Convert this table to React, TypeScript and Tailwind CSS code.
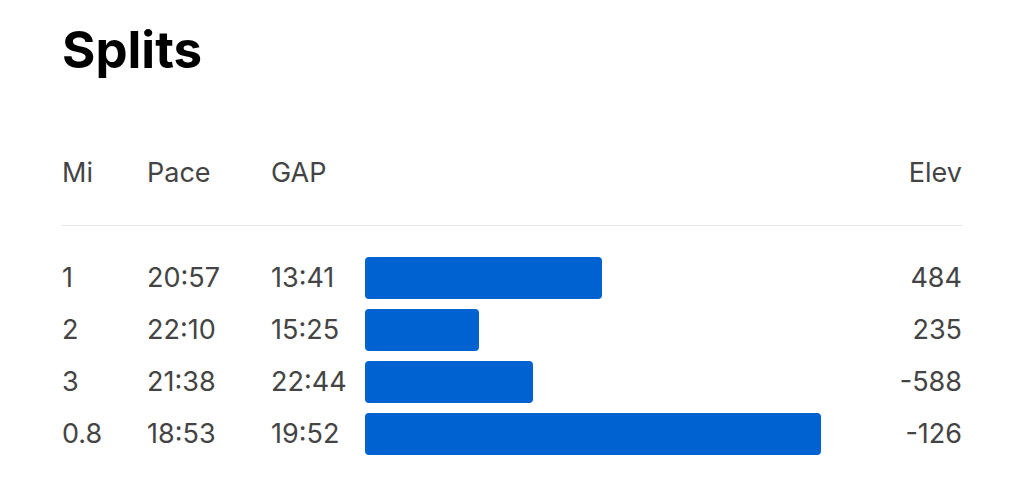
const splits = [
  { mi: "1", pace: "20:57", gap: "13:41", bar: 237, elev: "484" },
  { mi: "2", pace: "22:10", gap: "15:25", bar: 114, elev: "235" },
  { mi: "3", pace: "21:38", gap: "22:44", bar: 168, elev: "-588" },
  { mi: "0.8", pace: "18:53", gap: "19:52", bar: 456, elev: "-126" },
];

export default function App() {
  return (
    <div className="min-h-screen bg-white px-[62px] pt-6 font-['Inter',sans-serif]">
      <h1 className="text-[51px] leading-[51px] font-bold text-black">Splits</h1>

      {/* header */}
      <div className="mt-[82px] flex h-8 items-center text-[27px] leading-8 text-[#444]">
        <span className="w-[85px]">Mi</span>
        <span className="w-[124px]">Pace</span>
        <span className="w-[94px]">GAP</span>
        <span className="flex-1 text-right">Elev</span>
      </div>

      <div className="mt-9 h-px bg-[#e6e6e6]" />

      {/* rows */}
      <div className="mt-[31px] flex flex-col gap-[10px]">
        {splits.map((s) => (
          <div key={s.mi} className="flex h-[42px] items-center text-[27px] leading-[42px] text-[#444]">
            <span className="w-[85px]">{s.mi}</span>
            <span className="w-[124px]">{s.pace}</span>
            <span className="w-[94px]">{s.gap}</span>
            <div className="flex-1">
              <div className="h-[42px] rounded-[4px] bg-[#0062d1]" style={{ width: s.bar }} />
            </div>
            <span className="text-right">{s.elev}</span>
          </div>
        ))}
      </div>
    </div>
  );
}
